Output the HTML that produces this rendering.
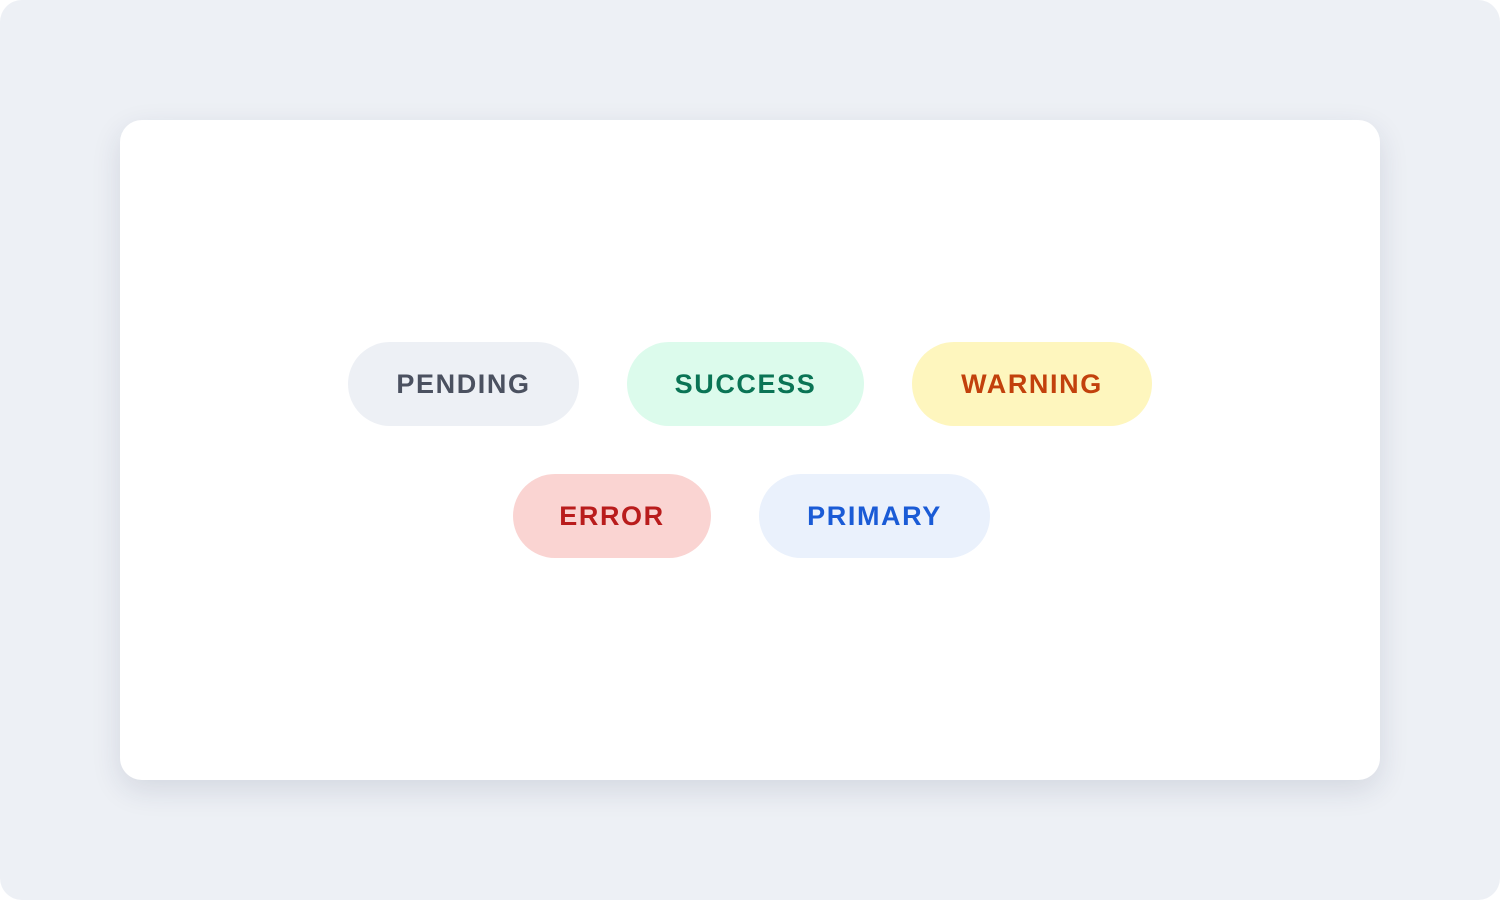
<!DOCTYPE html>
<html><head><style>
html,body{margin:0;padding:0;}
body{width:1500px;height:900px;background:#fff;position:relative;overflow:hidden;font-family:"Liberation Sans",sans-serif;}
.bg{position:absolute;left:0;top:0;width:1500px;height:900px;background:#edf0f5;border-radius:22px;}
.card{position:absolute;left:120px;top:120px;width:1260px;height:660px;background:#fff;border-radius:22px;box-shadow:0 10px 30px rgba(30,45,80,0.12);}
.p{position:absolute;height:84px;border-radius:42px;display:flex;align-items:center;justify-content:center;font-size:27px;font-weight:bold;letter-spacing:1.6px;}
</style></head><body>
<div class="bg"></div>
<div class="card"></div>
<div class="p" style="left:348px;top:342px;width:231px;background:#edf0f5;color:#4b5160">PENDING</div>
<div class="p" style="left:627px;top:342px;width:237px;background:#dcfbec;color:#0a7455">SUCCESS</div>
<div class="p" style="left:912px;top:342px;width:240px;background:#fef6be;color:#c2410c">WARNING</div>
<div class="p" style="left:513px;top:474px;width:198px;background:#fad4d2;color:#b91c1c">ERROR</div>
<div class="p" style="left:759px;top:474px;width:231px;background:#eaf1fc;color:#1a5bd6">PRIMARY</div>
</body></html>
